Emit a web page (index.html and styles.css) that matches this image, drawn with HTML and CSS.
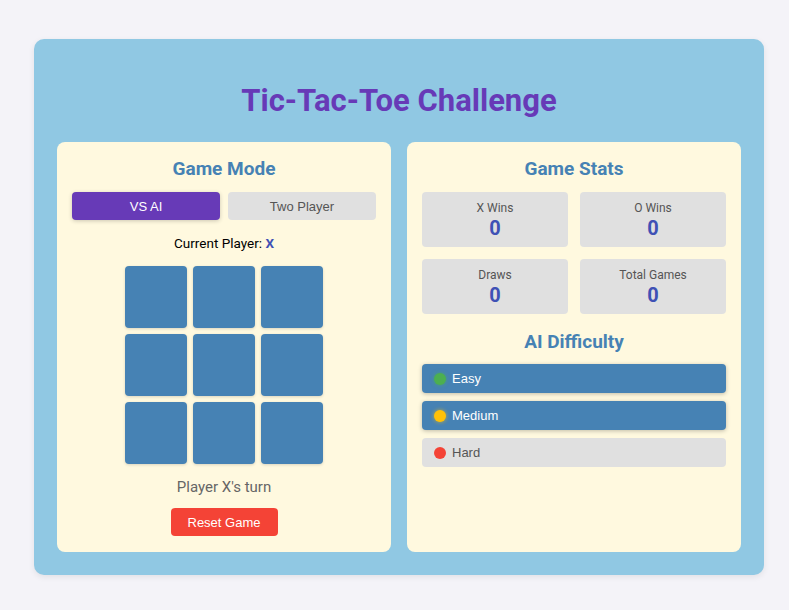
FILE: index.html
```html
<!DOCTYPE html>
<html>
<head>
<meta charset="utf-8">
<link rel="stylesheet" href="styles.css">
</head>
<body>
<div class="app">
  <h1 class="title">Tic-Tac-Toe Challenge</h1>
  <div class="panels">
    <section class="panel">
      <h2 class="heading">Game Mode</h2>
      <div class="modes">
        <button class="mode active">VS AI</button>
        <button class="mode">Two Player</button>
      </div>
      <div class="current">Current Player: <span class="mark">X</span></div>
      <div class="board">
        <div class="cell"></div><div class="cell"></div><div class="cell"></div>
        <div class="cell"></div><div class="cell"></div><div class="cell"></div>
        <div class="cell"></div><div class="cell"></div><div class="cell"></div>
      </div>
      <div class="status">Player X's turn</div>
      <button class="reset">Reset Game</button>
    </section>
    <section class="panel">
      <h2 class="heading">Game Stats</h2>
      <div class="stats">
        <div class="stat"><div class="label">X Wins</div><div class="value">0</div></div>
        <div class="stat"><div class="label">O Wins</div><div class="value">0</div></div>
        <div class="stat"><div class="label">Draws</div><div class="value">0</div></div>
        <div class="stat"><div class="label">Total Games</div><div class="value">0</div></div>
      </div>
      <h2 class="heading second">AI Difficulty</h2>
      <div class="levels">
        <button class="level on"><span class="dot green"></span>Easy</button>
        <button class="level on"><span class="dot yellow"></span>Medium</button>
        <button class="level"><span class="dot red"></span>Hard</button>
      </div>
    </section>
  </div>
</div>
</body>
</html>
```
FILE: styles.css
```css
html, body { margin: 0; }
body {
  background: #f4f3f8;
  font-family: Roboto, "Liberation Sans", sans-serif;
  padding: 39px 25px 35px 34px;
}
.app {
  background: #90c8e3;
  border-radius: 10px;
  padding: 23px;
  box-shadow: 0 2px 6px rgba(0,0,0,0.08);
}
.title {
  margin: 20px 0 22px;
  text-align: center;
  font-size: 31px;
  line-height: 38px;
  font-weight: 700;
  color: #673ab7;
}
.panels {
  display: flex;
  gap: 16px;
}
.panel {
  flex: 1;
  background: #fff9df;
  border-radius: 8px;
  padding: 15px;
  height: 380px;
  display: flex;
  flex-direction: column;
  align-items: center;
}
.heading {
  margin: 0;
  font-size: 19px;
  line-height: 24px;
  font-weight: 700;
  color: #4682b4;
  text-align: center;
}
.heading.second { margin-top: 16px; }
.modes {
  display: flex;
  gap: 8px;
  width: 100%;
  margin-top: 11px;
}
.mode {
  flex: 1;
  height: 28px;
  border: none;
  border-radius: 4px;
  background: #e0e0e0;
  color: #555;
  font-family: "Liberation Sans", Arial, sans-serif;
  font-size: 13px;
  padding: 0;
}
.mode.active {
  background: #673ab7;
  color: #fff;
  box-shadow: 0 1px 4px rgba(0,0,0,0.2);
}
.current {
  margin-top: 15px;
  font-size: 13.5px;
  line-height: 16px;
  color: #000;
}
.mark { color: #3f51b5; font-weight: 700; }
.board {
  margin-top: 15px;
  display: grid;
  grid-template-columns: repeat(3, 62px);
  grid-auto-rows: 62px;
  gap: 6px;
}
.cell {
  background: #4682b4;
  border-radius: 4px;
  box-shadow: 0 1px 3px rgba(0,0,0,0.15);
}
.status {
  margin-top: 14px;
  font-size: 15px;
  line-height: 18px;
  color: #666;
}
.reset {
  margin-top: 12px;
  width: 107px;
  height: 28px;
  border: none;
  border-radius: 4px;
  background: #f44336;
  color: #fff;
  font-family: "Liberation Sans", Arial, sans-serif;
  font-size: 13px;
  padding: 0;
}
.stats {
  margin-top: 11px;
  width: 100%;
  display: grid;
  grid-template-columns: 1fr 1fr;
  gap: 12px;
}
.stat {
  background: #e0e0e0;
  border-radius: 4px;
  height: 55px;
  display: flex;
  flex-direction: column;
  align-items: center;
  justify-content: center;
}
.label {
  font-size: 12px;
  line-height: 14px;
  color: #555;
}
.value {
  margin-top: 2px;
  font-size: 20px;
  line-height: 22px;
  font-weight: 700;
  color: #3f51b5;
}
.levels {
  margin-top: 10px;
  width: 100%;
  display: flex;
  flex-direction: column;
  gap: 8px;
}
.level {
  height: 29px;
  border: none;
  border-radius: 4px;
  background: #e0e0e0;
  color: #555;
  font-family: "Liberation Sans", Arial, sans-serif;
  font-size: 13px;
  display: flex;
  align-items: center;
  gap: 6px;
  padding: 0 12px;
  text-align: left;
}
.level.on {
  background: #4682b4;
  color: #fff;
  box-shadow: 0 1px 4px rgba(0,0,0,0.25);
}
.dot {
  width: 12px;
  height: 12px;
  border-radius: 50%;
  flex: none;
}
.green { background: #4caf50; }
.yellow { background: #ffc107; box-shadow: 0 0 4px rgba(255,193,7,0.7); }
.red { background: #f44336; }
.level.on .green { box-shadow: 0 0 4px rgba(76,175,80,0.7); }
```
